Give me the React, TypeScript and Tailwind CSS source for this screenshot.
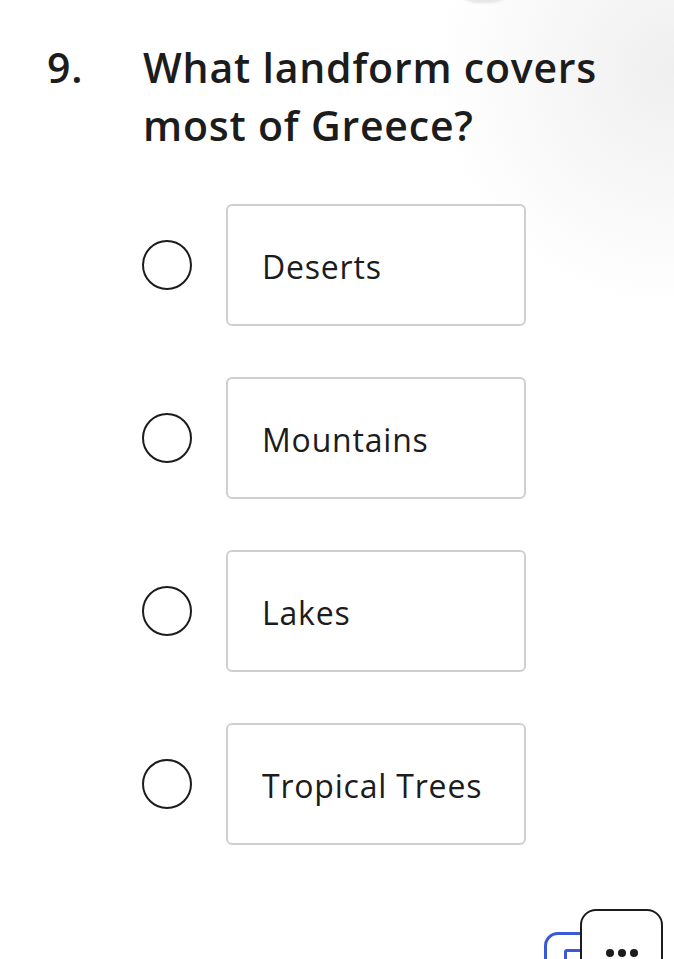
const OPTIONS = ["Deserts", "Mountains", "Lakes", "Tropical Trees"];

function Option({ label }: { label: string }) {
  return (
    <div className="flex items-center">
      <div className="h-[50px] w-[50px] shrink-0 rounded-full border-2 border-[#1c1c1c] bg-white" />
      <div className="ml-[34px] flex h-[122px] w-[300px] items-center rounded-[6px] border-2 border-[#cfcfcf] bg-white pl-[34px] pt-[3px] text-[32px] tracking-[0.8px] text-[#1c1c1c]">
        {label}
      </div>
    </div>
  );
}

export default function App() {
  return (
    <div className="relative h-[959px] w-[674px] overflow-hidden bg-white font-['Open_Sans',sans-serif] bg-[radial-gradient(240px_240px_at_100%_70px,#efefef,#ffffff)]">
      <div className="absolute left-[455px] top-[-40px] h-[43px] w-[58px] rounded-full bg-[#e6e6e6] blur-[1px]" />

      <div className="flex pl-[47px] pt-[38px] text-[41px] font-semibold leading-[58px] tracking-[0.8px] text-[#1c1c1c]">
        <span className="w-[96px] shrink-0">9.</span>
        <h1 className="w-[480px]">What landform covers most of Greece?</h1>
      </div>

      <div className="mt-[50px] flex flex-col gap-[51px] pl-[142px]">
        {OPTIONS.map((o) => (
          <Option key={o} label={o} />
        ))}
      </div>

      <div className="absolute left-[544px] top-[932px] h-[50px] w-[70px] rounded-[14px] border-[3px] border-[#3a5ad8]" />
      <div className="absolute left-[564px] top-[949px] h-[20px] w-[20px] rounded-[3px] border-[3px] border-[#3a5ad8]" />
      <div className="absolute left-[580px] top-[909px] flex h-[70px] w-[83px] justify-center gap-[4px] rounded-[16px] border-2 border-[#1c1c1c] bg-white pt-[38px]">
        <span className="h-[8px] w-[8px] rounded-full bg-[#1c1c1c]" />
        <span className="h-[8px] w-[8px] rounded-full bg-[#1c1c1c]" />
        <span className="h-[8px] w-[8px] rounded-full bg-[#1c1c1c]" />
      </div>
    </div>
  );
}
